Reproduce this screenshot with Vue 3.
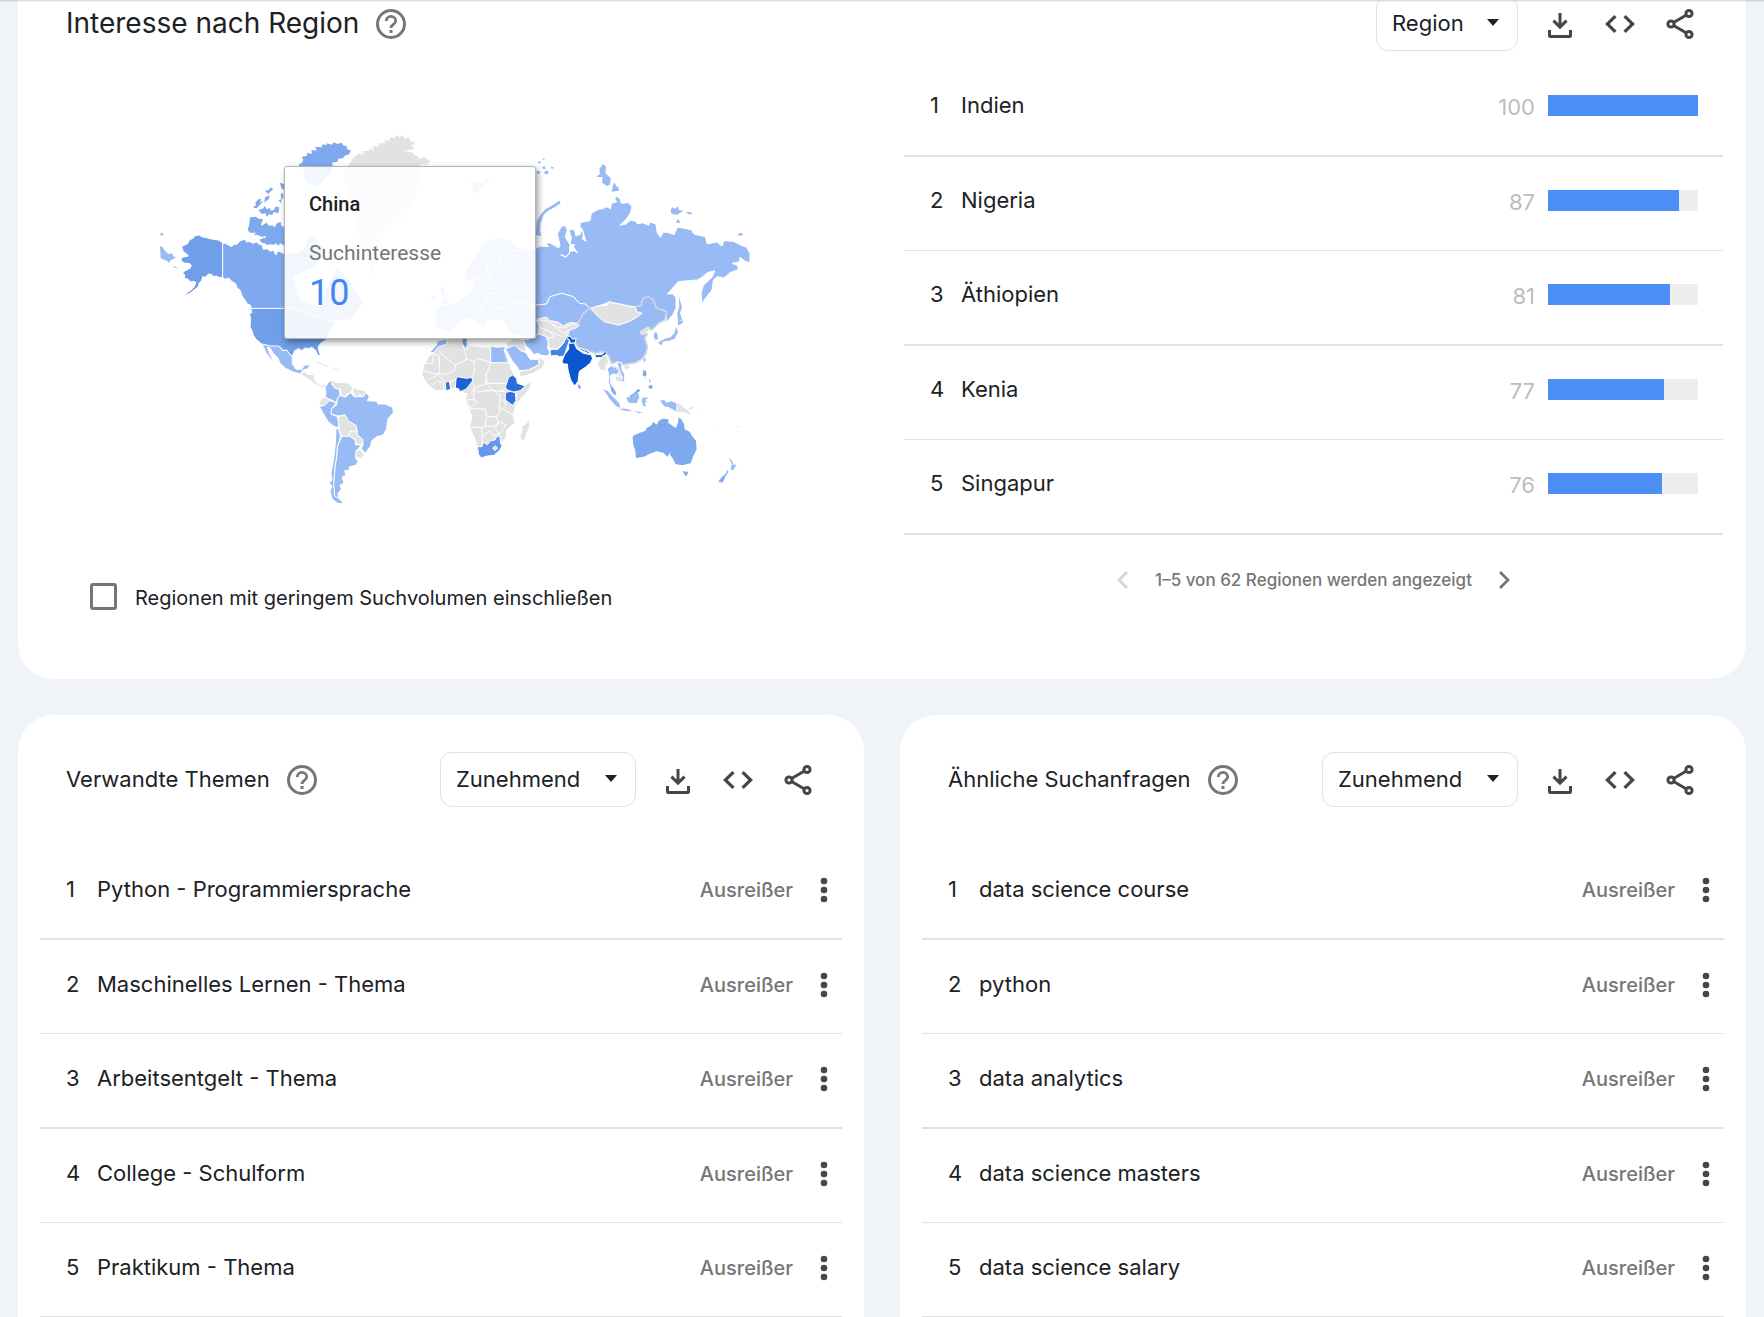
<script setup>
import { ref } from 'vue'

const includeLowVolume = ref(false)

const regions = [
  { name: 'Indien', value: 100 },
  { name: 'Nigeria', value: 87 },
  { name: 'Äthiopien', value: 81 },
  { name: 'Kenia', value: 77 },
  { name: 'Singapur', value: 76 },
]

const panels = [
  {
    id: 'topics',
    title: 'Verwandte Themen',
    rows: ['Python - Programmiersprache', 'Maschinelles Lernen - Thema', 'Arbeitsentgelt - Thema', 'College - Schulform', 'Praktikum - Thema'],
  },
  {
    id: 'queries',
    title: 'Ähnliche Suchanfragen',
    rows: ['data science course', 'python', 'data analytics', 'data science masters', 'data science salary'],
  },
]

const icons = {
  download: 'M16.5 7h3v10.600l4-4 2.100 2.100L18 23.300l-7.600-7.600 2.100-2.100 4 4zM6 24h3v5h18v-5h3v5.500a2.500 2.500 0 0 1-2.500 2.500h-19A2.500 2.500 0 0 1 6 29.500z',
  code: 'M12.300 27L3 18l9.300-9 2.300 2.300L7.700 18l6.900 6.700zM23.700 27l-2.300-2.300 6.900-6.700-6.900-6.700L23.700 9 33 18z',
}

// Map shapes are drawn on sheets that are three times finer than the map itself.
const sheets = [
  {
    x: 150, y: 120,
    shapes: [
      ['low', 'M30 378L38 382 45 392 55 402 65 400 72 410 78 412 70 418 62 420 58 428 45 420 32 415ZM30 340l6 -2 5 6 -8 3ZM68 438l10 2 6 5 -9 -2Z', 1],
      ['us', 'M95 378L112 372 118 360 130 354 135 347 148 345 155 350 165 352 180 356 190 358 205 360 218 368V473L206 472 200 468 192 470 186 464 176 462 165 472 158 470 155 482 147 490 145 500 135 508 120 520 95 532 115 516 130 504 138 488 132 484 120 486 115 478 102 474 105 466 98 460 102 454 120 445 124 436 118 430 105 430 95 424 92 416 100 411 115 408 108 400 100 396 98 388Z'],
      ['ca', 'M218 368L230 372 245 380 250 374 262 372 270 362 285 358 290 366 300 364 306 370 320 366 328 374 335 372 340 388 352 386 360 394 370 390 378 405 384 392 400 400 430 400 460 390 480 340 520 380 500 440 430 470 450 540 510 560 530 500 560 440 600 480 640 550 600 600 560 600 540 625 480 600 430 566H305L300 555 292 552 285 540 276 528 270 510 262 505 256 490 245 484 236 474 225 478 218 473Z'],
      ['ca', 'M300 292L318 290 326 296 340 298 335 306 333 318 350 308 358 318 366 316 375 322 380 310 392 306 394 318 402 320V376L390 370 385 378 378 370 372 374 360 370 352 376 345 370 335 368 328 358 345 356 348 348 336 350 322 344 312 346 318 338 300 338 293 330 298 312ZM308 262L318 256 316 248 325 238 334 236 330 246 340 244 328 256 320 265ZM325 270L338 266 345 258 350 268 360 264 362 272 372 270 376 260 388 262 385 280 372 276 366 286 358 282 350 290 346 280 335 282ZM345 212L356 210 362 202 370 208 362 214 355 222ZM345 232l14 -6 -2 10 -14 12ZM390 188l12 4v18l-8 -5ZM392 222l8 -3v14l-6 6ZM385 240l10 -2 -2 12ZM336 352l16 6 12 -2 12 8 -6 10 -20 -2Z', 1],
      ['ca', 'M445 135L455 128 460 120 455 110 470 108 472 98 486 102 484 90 500 92 496 80 515 82 518 72 528 76 532 70 545 74 552 67 562 72 575 68 580 76 592 80 590 86 603 92 596 104 586 106 580 114 565 116 562 126 545 128 550 140 540 160 520 180 500 200 470 190 460 160 464 142 452 140Z', 1],
    ],
  },
  {
    x: 270, y: 120,
    shapes: [
      ['none', 'M240 128L250 112 268 100 284 104 276 94 300 92 298 84 312 92 308 80 330 78 322 70 345 70 344 60 360 62 358 52 375 54 378 46 390 52 396 45 404 56 416 52 422 64 434 66 432 74 420 76 436 84 424 90 400 92 428 98 434 106 446 110 440 118 462 112 482 124 470 134 452 132 450 150 440 230 400 290 340 340 310 470 280 400 240 250 220 160Z', 1],
      ['low', 'M498 560L495 610 500 622 540 640 580 600 600 596 640 620 652 600 700 600 720 640 810 660V400L740 380 720 360 680 350 640 370 600 430 580 470 588 490 620 470 600 520 560 545 530 552ZM506 500L520 496 528 530 540 552 510 558 518 530ZM482 528l18 -4v20l-16 6ZM600 180l30 10 20 -15 12 8 -24 18 -18 25 -16 -22Z'],
      ['low', 'M590 555L630 550 640 580 620 600ZM650 440L680 400 700 440 690 480 660 500ZM640 520L700 520 710 560 660 570Z'],
    ],
  },
  {
    x: 230, y: 300,
    shapes: [
      ['us', 'M62 25H190L240 40 300 60 320 70 300 90 290 118 272 130 265 140 266 150 272 168 264 166 256 150 245 142 236 146 225 144 215 152 206 146 194 152 187 168 182 166 170 150 160 152 150 140H122L95 132 78 118 70 106 66 92 60 80 62 56 58 40 66 38Z'],
      ['low', 'M95 132L122 138 147 138 158 152 170 150 182 166 187 168 187 192 198 208 216 208 222 196 240 194 234 206 220 210 210 222 190 216 168 206 150 190 144 174 130 160 118 142 112 142 120 164 130 182 122 178 108 158 102 144Z'],
      ['none', 'M212 222L222 214 230 222 252 224 256 242 262 250 274 256 284 252 288 260 274 262 258 254 246 246 238 238 226 232ZM252 186L262 184 275 188 298 198 306 202 290 202 276 194 262 190ZM304 203l22 2 -3 6 -14 -4ZM282 206l8 1 -2 3ZM216 296l5 1 -2 4ZM370 586l8 -1 -2 5Z'],
      ['low', 'M285 262L296 246 308 240 306 254 314 264 328 268 330 286 322 296 320 308 305 300 285 292 288 276Z'],
      ['none', 'M308 240L320 248 332 246 355 250 368 262 362 278 350 282 346 292 336 290 330 268 314 264 306 254ZM368 262L385 268 405 272 412 282 400 290 388 286 378 290 370 280Z'],
      ['none', 'M275 295L290 292 298 302 285 315 272 320 268 310Z'],
      ['low', 'M268 320L285 315 298 302 320 308 306 324 303 342 322 350 327 372 322 384 308 376 295 366 284 348Z'],
      ['low', 'M322 296L330 286 346 292 362 278 372 290 400 290 408 278 418 290 412 302 440 304 444 312 465 312 488 322 490 338 474 356 470 385 460 405 440 410 425 422 422 438 406 460 394 446 400 430 380 405V380L355 365 345 345 325 348 303 342 305 325 320 315Z'],
      ['none', 'M325 350L345 345 354 362 378 376 382 395 362 394 355 408 335 410 327 390Z'],
      ['none', 'M358 396L378 392 384 406 400 420 394 434 378 432 376 418 358 408Z'],
      ['low', 'M335 410L358 408 376 420 376 434 394 436 380 452 377 474 384 484 378 496 358 500 358 510 344 512 348 526 336 532 342 548 330 556 334 568 324 580 326 598 312 586 310 556 315 500 320 470 322 440Z'],
      ['low', 'M318 384L326 388 332 410 322 440 320 470 315 500 311 550 314 588 328 596 342 612 322 610 306 596 300 572 306 560 298 548 306 540 303 520 312 470 316 430Z'],
      ['none', 'M378 450L392 450 404 464 392 476 378 470Z'],
    ],
  },
  {
    x: 520, y: 150,
    shapes: [
      ['low', 'M-60 330L-20 300 10 305 48 295 62 288 85 290 78 278 92 280 116 294 120 286 112 252 124 230 136 226 142 240 136 262 150 284 148 310 138 320 122 314 138 322 152 304 162 302 172 308 160 290 164 284 150 284 154 264 146 238 164 240 168 258 182 252 178 240 190 250 188 268 198 274 186 236 180 232V218L210 212 214 190 235 178 250 176 258 170 272 176 274 160 290 156 284 146 292 138 302 150 304 160 325 158 336 170 332 188 320 206 300 226 318 222 332 210 350 215 352 222 368 218 386 226 390 216 408 222 412 250 422 262 430 246 446 248 462 254 472 232 490 234 515 240 522 252 556 260 562 282 590 276 606 288 612 272 640 274 660 284 680 292 690 310V338L676 334 660 322 658 336 636 340 652 346 656 358 630 368 612 384 592 380 580 390 576 420 560 440 546 460 543 432 550 406 576 382 584 362 562 368 548 380 532 390 505 392 475 395 442 432 458 432 468 442 468 475 458 495 438 518 440 485 428 480 410 475 400 450 385 440 370 445 362 468 345 470 325 468 300 462 268 456 235 468 210 475 195 462 178 460 160 440 125 430 90 440 80 462 50 465 -50 450 -100 400Z'],
      ['low', 'M476 436L480 452 486 470 480 490 488 514 480 508 474 522 472 490 478 470ZM474 510L490 514 484 522 474 526ZM468 530L474 546 464 566 448 572 430 574 424 586 414 578 434 566 452 562 464 548ZM404 546l7 2 3 20 -9 1 -4 -10ZM48 256L50 215 60 196 76 178 100 164 118 152 122 160 104 172 84 182 70 196 62 220 60 240 64 258ZM228 80L240 72 238 56 250 42 258 50 256 70 272 84 270 104 262 108 246 98 248 82ZM275 125L280 102 285 98 288 108 295 112 297 122ZM54 36l8 -4 0 6 -8 3ZM66 52l8 -4 3 8 -8 2ZM50 62l10 2 -2 8 -8 -2ZM76 62l10 2 -4 10 -10 -4ZM92 50l10 2 -6 6ZM66 28l6 -4 2 6ZM452 182L456 172 466 176 474 168 476 180 490 182 472 194 455 192ZM498 186l14 0 6 6 -12 1ZM468 218l6 -12 8 12ZM652 254l10 -6 8 4 -8 6Z', 1],
      ['low', 'M30 470L50 465 80 462 90 440 125 430 160 440 178 460 195 462 210 475 190 490 188 508 175 520 150 518 130 528 112 516 88 512 80 502 60 505 48 512Z'],
      ['none', 'M58 506L80 502 90 512 112 516 130 528 150 518 172 520 158 532 142 540 146 560 130 566 120 580 100 600 82 592 88 570 64 556 62 530Z'],
      ['line', 'M78 530L104 550 120 545M100 520L126 552 140 545M84 566L110 555 140 560'],
      ['cn', 'M210 475L230 495 255 515 295 525 325 515 345 505 365 490 350 485 345 470 362 468 370 445 385 440 400 450 410 475 440 485 435 510 415 520 395 540 380 532 362 545 366 552 382 552 374 564 382 590 378 610 365 628 345 638 320 642 305 645 295 635 275 640 265 615 245 605 225 610 195 598 175 592 160 570 146 560 144 538 175 520 190 490Z'],
      ['none', 'M214 475L235 468 262 466 268 454 280 460 300 462 330 470 345 470 350 485 365 490 345 505 325 515 295 525 255 515 230 495Z'],
      ['none', 'M358 546L380 532 392 530 382 544 374 554 364 556ZM316 650l10 -4 2 8 -10 3Z', 1],
    ],
  },
  {
    x: 400, y: 320,
    shapes: [
      ['none', 'M66 165L70 140 84 112 100 98 112 80 135 58 190 56 202 60 205 75 230 80 265 82 310 78 320 100 335 150 345 168 358 190 375 196 397 182 388 208 360 240 346 262 340 285 345 308 320 330 318 355 302 368 305 380 285 405 243 412 232 380 222 350 208 322 216 290 205 262 195 240 202 222 180 215 165 204 150 208 132 212 108 212 90 200 76 184Z'],
      ['line', 'M72 130H98L100 100M118 96L165 135 168 150 140 162 118 162 95 160 70 152M98 100L118 108 118 162M165 135L200 118 222 124 224 150 216 172M188 75L195 95 200 118M205 78L200 90M222 124L232 115 272 128 258 165 258 190 224 205 212 222M272 82V128H325M258 190L280 212 316 215M258 165L262 190 300 190 318 190M80 180L100 172 118 162M95 195L110 182 130 190 132 212M118 170L136 186M152 208L150 184 168 178M216 175L224 205 220 240 232 245 210 265 256 268 260 290 290 290 296 310M232 215L240 216 258 212 280 212 300 225 298 262 300 280 284 292M210 265L200 240M208 322L245 322 256 318 258 295M245 322L248 376M248 350L268 332 285 350M256 318L280 320 300 305 318 315 300 340 285 345M300 262L340 285M296 310L285 325 302 345M300 240L316 240 316 260M200 240L225 238M318 205L300 212M345 260L350 250 350 218M355 212L375 200'],
      ['low', 'M88 98L108 76 114 62 140 58 140 72 114 82 102 98Z'],
      ['low', 'M272 78L290 82 318 80 312 90 325 128H272Z'],
      ['za', 'M188 56H202L198 66 200 76 195 82 188 70Z', 1],
      ['ng', 'M168 178L172 170 200 175 215 172 218 182 206 198 198 208 180 215 176 206 166 204Z'],
      ['ke', 'M136 186L148 184 152 208 138 212Z'],
      ['et', 'M316 202L326 172 338 165 350 176 352 190 376 198 360 212 340 216 322 210Z'],
      ['ke', 'M316 218L330 214 346 218 348 242 338 256 316 240Z'],
      ['za', 'M232 380L246 380 250 366 262 374 272 362 285 360 290 350 300 348 302 372 307 375 300 390 282 406 262 408 243 414 236 404Z'],
      ['none', 'M278 384l8 -6 7 6 -8 8Z'],
      ['none', 'M365 320L380 310 386 298 390 314 382 336 374 360 364 362 360 346 366 334Z'],
      ['none', 'M318 70L340 56 370 58 376 76 378 95 362 92 345 80 322 82Z'],
      ['low', 'M316 86L345 76 362 92 378 98 390 118 415 118 418 134 385 150 358 152 348 136 336 122Z'],
      ['none', 'M358 154L385 150 418 134 416 116 420 112 436 125 425 145 400 160 360 172Z'],
      ['low', 'M370 58L385 60 400 46 420 42 440 50 446 70 442 84 450 96 444 108 425 106 414 100 402 104 388 86 378 78Z'],
      ['none', 'M412 0L440 2 466 20 490 24 520 12 538 16 528 24 510 30 498 50 492 68 472 86 448 86 440 50 415 40 418 20Z'],
      ['line', 'M418 22L450 34 486 50M450 34L462 50 444 56M470 24L490 40 512 28'],
      ['pk', 'M450 96L452 88 474 88 492 68 498 52 508 62 500 86 492 108 478 110 470 106 452 108Z'],
      ['in', 'M486 124L494 104 506 88 506 70 522 68 530 86 550 100 572 104 578 114 572 128 556 142 538 154 534 184 524 198 512 180 504 150 502 132 490 132Z'],
      ['in', 'M498 50L510 48 518 58 528 54 526 68 512 70 508 60ZM538 88L568 102 568 96 544 86ZM584 104L606 104 616 94 620 100 606 114 596 112 588 114Z'],
      ['low', 'M536 194l6 6 0 7 -6 -1Z', 1],
    ],
  },
  {
    x: 560, y: 320,
    shapes: [
      ['none', 'M112 130L128 108 140 105 146 126 136 140 140 156 130 150 120 152Z'],
      ['low', 'M142 146L152 138 166 142 178 152 172 164 158 162 150 168 152 190 162 204 168 222 158 220 150 204 145 184 146 166ZM170 128L186 128 184 144 194 164 194 182 180 190 188 174 178 150Z'],
      ['none', 'M166 170H186L184 182 172 184ZM150 134L166 138 182 150 186 166 176 168 178 150 164 142ZM192 140l10 -6 4 8 -8 8Z', 1],
      ['ca', 'M154 200l10 10 6 14 -8 0 -8 -12ZM208 228L222 220 234 206 242 212 230 220 214 232ZM250 150l8 2 2 12 -6 6 -6 -4ZM264 198l12 -4 2 10 -8 4ZM256 172l6 8 -4 -2ZM266 176l6 6 -2 8ZM54 192l8 8 -2 6 -6 -4Z', 1],
      ['low', 'M130 208L144 214 160 232 178 250 180 264 168 258 150 238ZM178 266L198 266 216 272 208 274 184 270ZM222 273l14 2 14 4 -16 0ZM198 232L210 232 234 218 238 232 230 250 206 248ZM246 236L252 232 266 234 254 240 262 246 254 248 258 260 250 258 246 248ZM300 242l12 -2 8 8 14 -4 14 6v24l-14 -8 -10 -6 -10 0ZM250 120l4 -8 3 6 -4 10Z', 1],
      ['none', 'M348 250L362 254 378 268 396 284 384 282 370 276 350 276ZM384 268l14 -8 6 0 -14 10ZM420 268l8 3 -3 2ZM440 276l6 3ZM530 320l8 -3 -4 6ZM472 310l2 6 -3 -2Z', 1],
      ['ca', 'M218 352L222 346 240 338 256 332 262 322 272 318 280 306 290 314 296 302 308 296 326 298 324 308 348 324 354 308 356 292 364 298 372 312 374 328 390 336 396 348 408 362 410 388 400 408 392 430 366 436 346 432 340 418 330 404 332 396 322 410 310 398 290 394 268 402 252 410 228 414 226 392 220 376ZM368 452l10 4 8 -2 -6 14 -6 -2Z', 1],
      ['low', 'M506 412l10 10 4 12 10 0 -8 12 -8 6 -2 -8 4 -10ZM502 450l4 6 -10 14 -8 18 -14 -2 10 -14 12 -10Z', 1],
      ['ca', 'M496 464l-6 18 -12 4 8 -12Z', 1],
    ],
  },
]
</script>

<template>
  <div class="page">
    <div class="topline"></div>
    <main class="board">
      <section class="card" aria-labelledby="region-title">
        <header class="head">
          <h2 id="region-title" class="title title-large">Interesse nach Region</h2>
          <button class="icon-btn help" aria-label="Hilfe">
            <svg viewBox="0 0 36 36"><circle cx="18" cy="18" r="13.500" fill="none" stroke="currentColor" stroke-width="3" /><path d="M13.300 15c0-2.600 2.100-4.600 4.700-4.600s4.700 2 4.700 4.500c0 3.300-4.700 3.500-4.700 7" fill="none" stroke="currentColor" stroke-width="2.800" /><path d="M16.500 24h3v3h-3z" fill="currentColor" /></svg>
          </button>
          <div class="tools">
            <div class="picker picker-region">
              <select aria-label="Auflösung"><option>Region</option></select>
              <svg class="caret" viewBox="0 0 12 7"><path d="M0 0h12L6 7z" fill="currentColor" /></svg>
            </div>
            <button class="icon-btn" aria-label="Herunterladen"><svg viewBox="0 0 36 36"><path :d="icons.download" fill="currentColor" /></svg></button>
            <button class="icon-btn" aria-label="Einbetten"><svg viewBox="0 0 36 36"><path :d="icons.code" fill="currentColor" /></svg></button>
            <button class="icon-btn" aria-label="Teilen">
              <svg viewBox="0 0 36 36" fill="none" stroke="currentColor" stroke-width="3"><circle cx="27" cy="7.500" r="3.100" /><circle cx="9" cy="18" r="3.100" /><circle cx="27" cy="28.500" r="3.100" /><path d="M11.600 16.500l12.800-7.500M11.600 19.500l12.800 7.500" /></svg>
            </button>
          </div>
        </header>

        <div class="region-body">
          <div class="map-side">
            <div class="map">
              <svg class="world" viewBox="145 130 610 380" role="img" aria-label="Weltkarte">
                <g v-for="(sheet, i) in sheets" :key="i" :transform="`translate(${sheet.x} ${sheet.y}) scale(${1 / 3})`">
                  <path v-for="(shape, j) in sheet.shapes" :key="j" :d="shape[1]" :class="['land', shape[0], { isle: shape[2] }]" />
                </g>
              </svg>
              <div class="tip" role="tooltip">
                <strong class="tip-name">China</strong>
                <span class="tip-label">Suchinteresse</span>
                <span class="tip-value">10</span>
              </div>
            </div>
            <label class="check">
              <input v-model="includeLowVolume" type="checkbox" />
              <span>Regionen mit geringem Suchvolumen einschließen</span>
            </label>
          </div>

          <div class="rank-side">
            <ol class="list">
              <li v-for="(r, i) in regions" :key="r.name" class="row row-region">
                <span class="num">{{ i + 1 }}</span>
                <span class="name">{{ r.name }}</span>
                <span class="value">{{ r.value }}</span>
                <span class="bar"><span class="fill" :style="{ width: r.value + '%' }"></span></span>
              </li>
            </ol>
            <nav class="pager" aria-label="Seiten">
              <button class="icon-btn pale" disabled aria-label="Zurück"><svg viewBox="0 0 36 36"><path d="M22 10l-8 8 8 8" fill="none" stroke="currentColor" stroke-width="2.800" /></svg></button>
              <span>1–5 von 62 Regionen werden angezeigt</span>
              <button class="icon-btn" aria-label="Weiter"><svg viewBox="0 0 36 36"><path d="M14 10l8 8-8 8" fill="none" stroke="currentColor" stroke-width="2.800" /></svg></button>
            </nav>
          </div>
        </div>
      </section>

      <div class="pair">
        <section v-for="p in panels" :key="p.id" class="card" :aria-labelledby="p.id">
          <header class="head">
            <h2 :id="p.id" class="title">{{ p.title }}</h2>
            <button class="icon-btn help" aria-label="Hilfe">
              <svg viewBox="0 0 36 36"><circle cx="18" cy="18" r="13.500" fill="none" stroke="currentColor" stroke-width="3" /><path d="M13.300 15c0-2.600 2.100-4.600 4.700-4.600s4.700 2 4.700 4.500c0 3.300-4.700 3.500-4.700 7" fill="none" stroke="currentColor" stroke-width="2.800" /><path d="M16.500 24h3v3h-3z" fill="currentColor" /></svg>
            </button>
            <div class="tools">
              <div class="picker">
                <select :aria-label="'Sortierung ' + p.title"><option>Zunehmend</option></select>
                <svg class="caret" viewBox="0 0 12 7"><path d="M0 0h12L6 7z" fill="currentColor" /></svg>
              </div>
              <button class="icon-btn" aria-label="Herunterladen"><svg viewBox="0 0 36 36"><path :d="icons.download" fill="currentColor" /></svg></button>
              <button class="icon-btn" aria-label="Einbetten"><svg viewBox="0 0 36 36"><path :d="icons.code" fill="currentColor" /></svg></button>
              <button class="icon-btn" aria-label="Teilen">
                <svg viewBox="0 0 36 36" fill="none" stroke="currentColor" stroke-width="3"><circle cx="27" cy="7.500" r="3.100" /><circle cx="9" cy="18" r="3.100" /><circle cx="27" cy="28.500" r="3.100" /><path d="M11.600 16.500l12.800-7.500M11.600 19.500l12.800 7.500" /></svg>
              </button>
            </div>
          </header>
          <ol class="list panel-list">
            <li v-for="(name, i) in p.rows" :key="name" class="row">
              <span class="num">{{ i + 1 }}</span>
              <span class="name">{{ name }}</span>
              <span class="badge">Ausreißer</span>
              <button class="icon-btn" aria-label="Mehr">
                <svg viewBox="0 0 36 36" fill="currentColor"><circle cx="18" cy="9" r="3.300" /><circle cx="18" cy="18" r="3.300" /><circle cx="18" cy="27" r="3.300" /></svg>
              </button>
            </li>
          </ol>
        </section>
      </div>
    </main>
  </div>
</template>

<style>
body {
  margin: 0;
  background: #f0f3f8;
}
</style>

<style scoped>
* {
  box-sizing: border-box;
}
.page {
  height: 100vh;
  overflow: hidden;
  background: #f0f3f8;
  color: #202124;
  font-family: Inter, "Open Sans", sans-serif;
  font-size: 22px;
  line-height: 28px;
}
.topline {
  position: relative;
  z-index: 2;
  height: 0;
  box-shadow: 0 0 2px 1px rgba(0, 0, 0, 0.2);
}
/* The board is scrolled so that the first card starts above the window. */
.board {
  margin-top: -41px;
  padding: 0 18px;
}
.card {
  background: #fff;
  border-radius: 36px;
  padding-top: 37px;
}
.head {
  display: flex;
  align-items: center;
  height: 55px;
  padding: 0 48px;
}
.title {
  margin: 0 14px 0 0;
  padding-bottom: 2px;
  font-size: 22px;
  font-weight: 400;
  white-space: nowrap;
}
.title-large {
  font-size: 28px;
}
.tools {
  display: flex;
  align-items: center;
  gap: 24px;
  margin-left: auto;
}
.icon-btn {
  flex: none;
  width: 36px;
  height: 36px;
  padding: 0;
  border: 0;
  background: none;
  color: #444746;
}
.icon-btn svg {
  display: block;
  width: 36px;
  height: 36px;
}
.help {
  color: #757775;
}
.picker {
  position: relative;
  width: 196px;
}
.picker-region {
  width: 142px;
}
.picker select {
  appearance: none;
  display: block;
  width: 100%;
  height: 55px;
  padding: 0 15px 2px;
  border: 1px solid #e0e0e0;
  border-radius: 12px;
  background: #fff;
  color: #202124;
  font: inherit;
}
.caret {
  position: absolute;
  right: 19px;
  top: 23px;
  width: 12px;
  height: 7px;
  pointer-events: none;
}

.region-body {
  display: grid;
  grid-template-columns: 1fr 1fr;
  padding-bottom: 69px;
}
.map-side {
  padding-top: 79px;
}
.map {
  position: relative;
  width: 610px;
  max-width: 100%;
  margin: 0 auto;
}
.world {
  display: block;
  width: 100%;
}
.land {
  stroke: #fff;
  stroke-width: 3;
  stroke-linejoin: round;
}
.isle {
  stroke: none;
}
.none { fill: #e2e2e2; }
.low { fill: #98bbf6; }
.cn { fill: #98bbf6; stroke: #cfd3da; stroke-width: 5; }
.ca { fill: #7fa9ee; }
.us { fill: #6f9fe9; }
.za { fill: #6598ea; }
.pk { fill: #4583e3; }
.ke { fill: #3071de; }
.et { fill: #2a6cda; }
.ng { fill: #1c63d6; }
.in { fill: #0b57d0; }
.line { fill: none; }

.tip {
  position: absolute;
  left: 139px;
  top: 36px;
  display: flex;
  flex-direction: column;
  width: 252px;
  height: 173px;
  padding: 23px 24px;
  border: 1px solid #b5b5b5;
  border-radius: 3px;
  background: rgba(255, 255, 255, 0.9);
  box-shadow: 2px 3px 6px rgba(0, 0, 0, 0.4);
  font-family: Roboto, sans-serif;
}
.tip-name {
  font-size: 20px;
  font-weight: 500;
}
.tip-label {
  margin-top: 21px;
  font-size: 21px;
  color: #757575;
}
.tip-value {
  margin-top: 8px;
  font-size: 36px;
  line-height: 36px;
  color: #4285f4;
}

.check {
  display: flex;
  align-items: center;
  gap: 18px;
  width: max-content;
  height: 28px;
  margin: 72px 0 0 72px;
  font-size: 20px;
}
.check input {
  appearance: none;
  width: 27px;
  height: 27px;
  margin: 0;
  border: 3px solid #757575;
  border-radius: 3px;
  background: #fff;
}
.check input:checked {
  background: #4285f4;
}
.check span {
  padding-top: 4px;
}

.rank-side {
  padding: 11px 23px 0 22px;
}
.list {
  list-style: none;
  margin: 0;
  padding: 0;
}
.row {
  display: flex;
  align-items: center;
  height: 95px;
  padding: 0 0 4px 26px;
  border-bottom: 2px solid #e2e2e2;
}
.row:nth-child(even) {
  height: 94px;
  border-bottom-width: 1px;
}
.row-region {
  padding-right: 25px;
  padding-bottom: 6px;
}
.num {
  flex: none;
  width: 31px;
}
.num,
.name {
  padding-bottom: 2px;
}
.name {
  flex: 1;
}
.value {
  padding-top: 2px;
  color: #bdbdbd;
}
.bar {
  width: 150px;
  height: 21px;
  margin-left: 13px;
  background: #eee;
}
.fill {
  display: block;
  height: 100%;
  background: #4c8df6;
}
.pager {
  display: flex;
  align-items: center;
  justify-content: center;
  gap: 14px;
  margin-top: 27px;
  font-size: 17px;
  font-weight: 500;
  color: #757775;
}
.pager .icon-btn {
  color: #757775;
}
.pager .pale {
  color: #d5d5d5;
}

.pair {
  display: grid;
  grid-template-columns: 1fr 1fr;
  gap: 36px;
  margin-top: 36px;
}
.panel-list {
  margin: 38px 22px 0;
  padding-bottom: 60px;
}
.badge {
  margin-right: 13px;
  font-size: 20px;
  font-weight: 500;
  color: #757775;
}
</style>
